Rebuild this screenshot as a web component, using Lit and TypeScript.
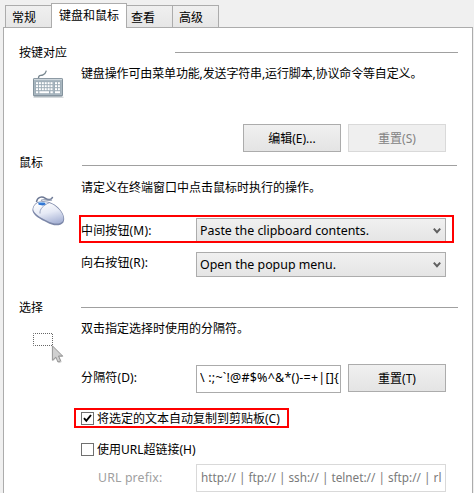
import { LitElement, html, css, svg } from "lit";
import { customElement, property } from "lit/decorators.js";

const keyRows = [0, 1, 2].map((r) =>
  [0, 1, 2, 3, 4, 5, 6, 7].map(
    (c) => svg`<rect x=${4 + c * 2.9 + (c > 5 ? 1.6 : 0)} y=${12.2 + r * 3} width="2" height="2" fill="#fff"/>`
  )
);

const keyboardIcon = html`<svg width="34" height="30" viewBox="0 0 34 30">
  <path d="M6.5 8 C6.5 4.5 8.5 6 11 4.8 C14 3.6 13.8 2 14.3 .6" fill="none" stroke="#788790" stroke-width="1.3"/>
  <rect x="1.5" y="26.6" width="30" height="1.4" fill="#d5d9dc"/>
  <rect x="1.5" y="8.5" width="29" height="17.6" rx=".6" fill="#a9b7c0" stroke="#84939d"/>
  <path d="M2 9.4H30" stroke="#d3dbe0"/>
  <rect x="3.2" y="11.4" width="25.6" height="12.4" fill="#9cabb5"/>
  ${keyRows}
  <path d="M4 22.2H6.2M7.4 22.2H17M18.4 22.2H20.8M23 22.2H28" stroke="#fff" stroke-width="2"/>
  <path d="M21.7 11.5V24" stroke="#a9b7c0" stroke-width="1"/>
  <path d="M2 25.5H30" stroke="#8694a0" stroke-width="1"/>
</svg>`;

const mouseIcon = html`<svg width="36" height="36" viewBox="0 0 36 36">
  <defs>
    <linearGradient id="b" x1=".3" y1="0" x2=".65" y2="1">
      <stop offset="0" stop-color="#ffffff"/><stop offset=".5" stop-color="#e5e9f5"/><stop offset="1" stop-color="#a9b4d6"/>
    </linearGradient>
  </defs>
  <path d="M4.5 8 C5 3 10 2 13 4.2 C16 6.4 20 6 20.6 2.8" fill="none" stroke="#6c7894" stroke-width="1.5"/>
  <path d="M9 6.5 C11 4.5 15 7 20 6" fill="none" stroke="#8793ac" stroke-width="1.2"/>
  <path d="M.4 16.5 C.4 12 4 7 9 7.5 C16 6.5 23 9.5 28 15.5 C32 20 33.2 25 31.4 28.5 C28 32.5 21 32 15 28.5 C9 25.5 1.5 22 .4 16.5Z" fill="#7c87a8"/>
  <path d="M1.2 15.3 C1.4 11.5 5 8 9.5 8 C16 7.3 22.5 10 27.3 15.8 C31 20 32.4 24 30.8 27.3 C27.5 30.8 21 30 15 26.7 C8.5 23.5 1.8 20 1.2 15.3Z" fill="url(#b)"/>
  <path d="M8 19.5 C7.6 15 11 11.5 17.4 8.6" fill="none" stroke="#909bb9" stroke-width=".9"/>
  <path d="M6.2 8.6 L12.4 8.4 L14 10.2 L10.8 11.6 L6.6 10.8Z" fill="#2e74d2"/>
  <path d="M7 8.6H11.8" stroke="#8cc0f5" stroke-width=".8"/>
</svg>`;

const selectIcon = html`<svg width="34" height="34" viewBox="0 0 34 34">
  <rect x="1.5" y="1.5" width="19" height="12" fill="#fff" stroke="#666" stroke-dasharray="1 1" stroke-dashoffset=".5"/>
  <path d="M20.5 14V28.5L24 25.3L26.2 30.5L29.2 29.2L27 24.3H31Z" transform="translate(.6 .8)" fill="#ccc"/>
  <path d="M20.4 13.8V28.3L23.8 25.1L25.9 30L28.6 28.8L26.5 24H30.6Z" fill="#d0d0d0" stroke="#8d8d8d" stroke-width=".9"/>
</svg>`;

const base = css`
  *, :host { box-sizing: border-box; }
  :host {
    font-family: "Noto Sans", "Noto Sans CJK SC", sans-serif;
    font-size: 12px;
    line-height: 18px;
    color: #000;
    white-space: nowrap;
  }
`;

@customElement("push-button")
class PushButton extends LitElement {
  @property() label = "";
  @property({ type: Boolean }) disabled = false;
  static styles = [base, css`
    :host { display: block; width: 98px; height: 28px; }
    button {
      display: block; width: 100%; height: 100%; padding: 2px 0 0;
      border: 1px solid #acacac; color: #000;
      background: linear-gradient(#f0f0f0, #e4e4e4);
      font: inherit; line-height: 24px;
    }
    button:disabled { border-color: #d9d9d9; background: #efefef; color: #838383; }
  `];
  render() { return html`<button ?disabled=${this.disabled}>${this.label}</button>`; }
}

@customElement("drop-down")
class DropDown extends LitElement {
  @property() value = "";
  static styles = [base, css`
    :host {
      display: flex; justify-content: space-between; align-items: center;
      width: 250px; height: 25px; padding: 0 4px 0 3px;
      border: 1px solid #acacac;
      background: linear-gradient(#f0f0f0, #e5e5e5);
      font-size: 12.4px;
    }
    svg { display: block; }
  `];
  render() {
    return html`<span>${this.value}</span>
      <svg width="8" height="8" viewBox="0 0 8 8"><path d="M.8 1.6L4 5.2L7.2 1.6" fill="none" stroke="#606060" stroke-width="2"/></svg>`;
  }
}

@customElement("check-item")
class CheckItem extends LitElement {
  @property() label = "";
  @property({ type: Boolean }) checked = false;
  static styles = [base, css`
    :host { display: flex; align-items: center; gap: 3px; height: 18px; }
    .box { width: 13px; height: 13px; border: 1px solid #707070; background: #fff; }
    .text { padding-top: 2px; }
    svg { display: block; }
  `];
  render() {
    return html`<span class="box">${this.checked
      ? html`<svg width="11" height="11" viewBox="0 0 11 11"><path d="M2 5.2L4.3 7.8L9 2" fill="none" stroke="#000" stroke-width="1.9"/></svg>`
      : ""}</span><span class="text">${this.label}</span>`;
  }
}

@customElement("app-root")
class AppRoot extends LitElement {
  static styles = [base, css`
    :host {
      display: flex; flex-direction: column;
      width: 474px; height: 493px; padding: 3px 1px 0 3px;
      background: #f0f0f0; overflow: hidden;
    }
    .tabs { display: flex; align-items: flex-end; height: 24px; padding-left: 2px; flex: none; }
    .tab {
      width: 47px; height: 22px; padding-left: 6px; line-height: 23px;
      border: 1px solid #acacac; border-bottom: 0;
      background: linear-gradient(#f0f0f0, #e6e6e6);
    }
    .tab + .tab { border-left: 0; width: 46px; padding-left: 4px; }
    .tabs .tab:last-child { padding-left: 6px; }
    .tabs .tab.active {
      width: 76px; height: 25px; margin: 0 0 -1px -1px; padding-left: 7px;
      border-left: 1px solid #acacac;
      background: #fff; z-index: 1; line-height: 23px;
    }
    .page {
      flex: 1; display: flex; flex-direction: column;
      border: 1px solid #acacac; border-bottom: 0; background: #fff;
      padding: 15px 14px 0 15px;
    }
    .head { display: flex; justify-content: space-between; align-items: center; height: 18px; flex: none; }
    .head span { padding-top: 2px; }
    .rule { height: 1px; background: #a0a0a0; width: 377px; }
    .rule.short { width: 283px; }
    .rule.mid { width: 375px; margin: 6px 1px 0 0; }
    .body { display: grid; grid-template-columns: 62px 1fr; flex: none; }
    .icon { padding-left: 13px; }
    .icon svg { display: block; }
    .s1 { height: 92px; padding-top: 3px; }
    .s1 .icon { padding-top: 6px; }
    .s1 .desc { letter-spacing: -0.14px; }
    .s2 { height: 127px; padding-top: 7px; }
    .s2 .icon { padding-top: 16px; }
    .s3 { height: 180px; padding-top: 3px; }
    .s3 .icon { padding: 13px 0 0 13px; }
    .desc { height: 18px; line-height: 20px; }
    .row { display: flex; position: relative; width: 365px; }
    .row .label { width: 115px; flex: none; letter-spacing: .15px; }
    .buttons { justify-content: flex-end; gap: 7px; margin-top: 42px; }
    .middle { margin-top: 22px; height: 25px; }
    .right { margin-top: 9px; height: 25px; }
    .middle .label { line-height: 26px; }
    .right .label { line-height: 22px; }
    .mark { position: absolute; border: 2px solid #f00; }
    .middle .mark { left: -2px; top: -3px; width: 375px; height: 28px; }
    .delims { margin-top: 27px; height: 29px; }
    .delims .label { line-height: 28px; }
    .field {
      border: 1px solid #ababab; height: 28px; padding: 0 3px; line-height: 24px;
      overflow: hidden; background: #fff;
    }
    .field span { display: block; overflow: hidden; }
    .delims .field { width: 145px; margin: 1px 7px 0 0; padding-right: 1px; font-size: 12.5px; letter-spacing: .2px; }
    .copy { margin-top: 16px; height: 18px; }
    .copy .mark { left: -7px; top: -1px; width: 215px; height: 20px; }
    .links { margin-top: 13px; height: 18px; }
    .prefix { margin-top: 6px; color: #a0a0a0; }
    .prefix .label { padding-left: 17px; line-height: 27px; font-size: 12.3px; }
    .prefix .field { width: 250px; border-color: #d9d9d9; color: #7a7a7a; padding: 0 3px 0 4px; font-size: 11.75px; }
  `];

  render() {
    return html`
      <div class="tabs">
        <div class="tab">常规</div><div class="tab active">键盘和鼠标</div><div class="tab">查看</div><div class="tab">高级</div>
      </div>
      <div class="page">
        <div class="head"><span>按键对应</span><div class="rule short"></div></div>
        <div class="body s1">
          <div class="icon">${keyboardIcon}</div>
          <div>
            <div class="desc">键盘操作可由菜单功能,发送字符串,运行脚本,协议命令等自定义。</div>
            <div class="row buttons">
              <push-button label="编辑(E)..."></push-button>
              <push-button label="重置(S)" disabled></push-button>
            </div>
          </div>
        </div>
        <div class="head"><span>鼠标</span><div class="rule mid"></div></div>
        <div class="body s2">
          <div class="icon">${mouseIcon}</div>
          <div>
            <div class="desc">请定义在终端窗口中点击鼠标时执行的操作。</div>
            <div class="row middle">
              <span class="label">中间按钮(M):</span>
              <drop-down value="Paste the clipboard contents."></drop-down>
              <div class="mark"></div>
            </div>
            <div class="row right">
              <span class="label">向右按钮(R):</span>
              <drop-down value="Open the popup menu."></drop-down>
            </div>
          </div>
        </div>
        <div class="head"><span>选择</span><div class="rule"></div></div>
        <div class="body s3">
          <div class="icon">${selectIcon}</div>
          <div>
            <div class="desc">双击指定选择时使用的分隔符。</div>
            <div class="row delims">
              <span class="label">分隔符(D):</span>
              <div class="field"><span>\\ :;~\`!@#$%^&*()-=+|[]{</span></div>
              <push-button label="重置(T)"></push-button>
            </div>
            <div class="row copy">
              <check-item label="将选定的文本自动复制到剪贴板(C)" checked></check-item>
              <div class="mark"></div>
            </div>
            <div class="row links"><check-item label="使用URL超链接(H)"></check-item></div>
            <div class="row prefix">
              <span class="label">URL prefix:</span>
              <div class="field"><span>http:// | ftp:// | ssh:// | telnet:// | sftp:// | rl</span></div>
            </div>
          </div>
        </div>
      </div>
    `;
  }
}
